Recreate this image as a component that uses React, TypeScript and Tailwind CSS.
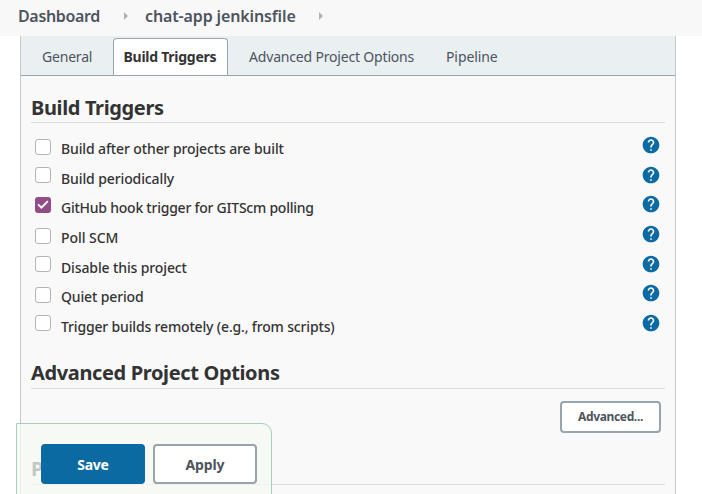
import { ReactNode } from "react";

type Option = { label: string; row: string; text: string; box: string; checked?: boolean };

const options: Option[] = [
  { label: "Build after other projects are built", row: "h-[30px]", text: "tracking-[-0.12px]", box: "mt-[5px]" },
  { label: "Build periodically", row: "h-[29px]", text: "tracking-[-0.11px]", box: "mt-[3px]" },
  { label: "GitHub hook trigger for GITScm polling", row: "h-[30px]", text: "tracking-[-0.24px]", box: "mt-1", checked: true },
  { label: "Poll SCM", row: "h-[30px]", text: "tracking-[-0.05px]", box: "mt-[5px]" },
  { label: "Disable this project", row: "h-[29px]", text: "tracking-[-0.12px]", box: "mt-[3px]" },
  { label: "Quiet period", row: "h-[30px]", text: "tracking-[-0.14px]", box: "mt-[5px]" },
  { label: "Trigger builds remotely (e.g., from scripts)", row: "h-[30px]", text: "tracking-[-0.16px]", box: "mt-[3px]" },
];

function Checkbox({ checked, className }: { checked?: boolean; className: string }) {
  if (checked) {
    return (
      <span className={`${className} flex size-4 items-center justify-center rounded-[3px] bg-[#924c86]`}>
        <svg viewBox="0 0 16 16" className="size-4" fill="none" stroke="#fff" strokeWidth="1.9">
          <path d="M3.1 7.4 6.4 10.7 12.9 4.2" />
        </svg>
      </span>
    );
  }
  return <span className={`${className} size-4 rounded-[3px] border border-[#b4b4b4] bg-white`} />;
}

function HelpIcon() {
  return (
    <svg viewBox="0 0 24 24" className="mt-px mr-1 size-5" fill="#0b6aa2">
      <path d="M12 2C6.48 2 2 6.48 2 12s4.48 10 10 10 10-4.48 10-10S17.52 2 12 2zm1 17h-2v-2h2v2zm2.07-7.75l-.9.92C13.45 12.9 13 13.5 13 15h-2v-.5c0-1.1.45-2.1 1.17-2.83l1.24-1.26c.37-.36.59-.86.59-1.41 0-1.1-.9-2-2-2s-2 .9-2 2H8c0-2.21 1.79-4 4-4s4 1.79 4 4c0 .88-.36 1.68-.93 2.25z" />
    </svg>
  );
}

function SectionTitle({ children, leading = "leading-[30px]" }: { children: ReactNode; leading?: string }) {
  return (
    <h2 className={`${leading} h-[31px] border-b border-[#dcdcdc] text-xl font-bold tracking-[-0.36px] text-[#333]`}>
      {children}
    </h2>
  );
}

function Arrow() {
  return (
    <svg viewBox="0 0 4 8" className="h-2 w-1" fill="#b3b3b3">
      <path d="M0 0 4 4 0 8z" />
    </svg>
  );
}

export default function App() {
  return (
    <div className="relative h-[494px] w-[702px] overflow-hidden bg-white font-['Noto_Sans',sans-serif]">
      <header className="flex h-9 items-center bg-[#f8f8f8] pb-1 pl-[18px] text-base leading-8 font-semibold text-[#4d545d]">
        <span className="w-[106px] tracking-[-0.34px]">Dashboard</span>
        <Arrow />
        <span className="ml-[17px] w-[174px] tracking-[-0.13px]">chat-app jenkinsfile</span>
        <Arrow />
      </header>

      <main className="ml-5 h-[480px] w-[656px] border-x border-[#c6c6c6] bg-[#f9f9f9]">
        <nav className="flex h-10 border-b border-[#98a4ad] bg-[#eaeff2] pt-0.5 text-sm leading-[37px] text-[#4d545d]">
          <span className="w-[92px] pl-[21px] tracking-[-0.2px]">General</span>
          <span className="w-[115px] rounded-t border border-b-0 border-[#98a4ad] bg-white pl-[9.5px] leading-[35px] font-bold tracking-[-0.26px] text-[#333]">
            Build Triggers
          </span>
          <span className="w-[197px] pl-[21px] tracking-[-0.18px]">Advanced Project Options</span>
          <span className="pl-[21px] tracking-[-0.1px]">Pipeline</span>
        </nav>

        <div className="px-2.5 pt-4">
          <SectionTitle leading="leading-8">Build Triggers</SectionTitle>
          <ul className="mt-[11px]">
            {options.map((o) => (
              <li key={o.label} className={`${o.row} flex items-start pl-1`}>
                <Checkbox checked={o.checked} className={o.box} />
                <span className={`${o.text} ml-2.5 flex-1 text-sm leading-[29px] font-medium text-[#333]`}>{o.label}</span>
                <HelpIcon />
              </li>
            ))}
          </ul>

          <div className="mt-4">
            <SectionTitle>Advanced Project Options</SectionTitle>
          </div>
          <div className="flex h-[65px] justify-end pt-3 pr-1">
            <button className="h-8 w-[101px] rounded border-2 border-[#98a4ad] bg-white text-xs leading-4 font-bold tracking-[-0.36px] text-[#4d545d]">
              Advanced...
            </button>
          </div>
          <SectionTitle>Pipeline</SectionTitle>
        </div>
      </main>

      <div className="absolute top-[423px] left-4 flex h-[90px] w-64 gap-2 rounded-tr-[10px] border border-[#a9ceb9] bg-[#f6faf2]/75 pt-5 pl-6">
        <button className="h-10 w-[104px] rounded bg-[#0b6aa2] pt-px text-sm font-bold tracking-[-0.3px] text-white">Save</button>
        <button className="h-10 w-[104px] rounded border-2 border-[#98a4ad] bg-white pt-px text-sm font-bold tracking-[-0.1px] text-[#4d545d]">
          Apply
        </button>
      </div>
    </div>
  );
}
